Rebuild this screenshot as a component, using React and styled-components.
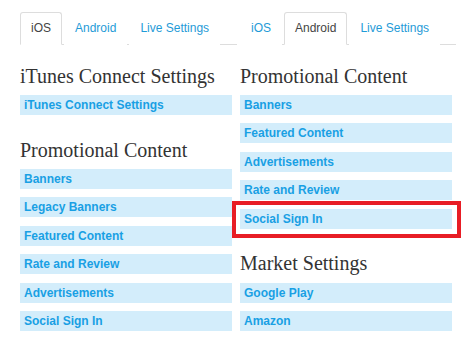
import React from 'react'
import styled, { createGlobalStyle } from 'styled-components'

const GlobalStyle = createGlobalStyle`
  body {
    margin: 0;
    background: #fff;
    font-family: "Liberation Sans", Arial, sans-serif;
  }
`

const Page = styled.div`
  display: grid;
  grid-template-columns: 217px 216px;
  column-gap: 3px;
  padding: 12px 0 0 20px;
`

const Column = styled.div`
  display: flex;
  flex-direction: column;
`

const TabBar = styled.ul`
  display: flex;
  margin: 0;
  padding: 0;
  list-style: none;
  height: 32px;
  border-bottom: 1px solid #ddd;
`

const Tab = styled.li`
  box-sizing: border-box;
  height: 33px;
  margin: 0 2px -1px 0;
  padding: 0 10px;
  line-height: 31px;
  font-size: 12px;
  color: ${p => (p.$active ? '#444' : '#1f9bd7')};
  background: #fff;
  border: 1px solid ${p => (p.$active ? '#ddd' : 'transparent')};
  border-bottom-color: ${p => (p.$active ? '#fff' : 'transparent')};
  border-radius: 3px 3px 0 0;
  white-space: nowrap;
`

const Section = styled.section`
  margin-top: ${p => (p.$first ? '18.5px' : '22.5px')};
`

const Heading = styled.h2`
  margin: 0 0 7.5px;
  font-family: "Liberation Serif", "Times New Roman", serif;
  font-weight: normal;
  font-size: 20px;
  line-height: 24px;
  color: #333;
`

const List = styled.ul`
  display: flex;
  flex-direction: column;
  gap: 8.4px;
  margin: 0;
  padding: 0;
  list-style: none;
`

const Row = styled.li`
  position: relative;
  box-sizing: border-box;
  width: 212px;
  height: 20px;
  padding-left: 4px;
  line-height: 20px;
  font-size: 12px;
  font-weight: bold;
  color: #19a0e4;
  background: #d3edfb;
`

const Highlight = styled.span`
  position: absolute;
  inset: -8px -9px -9px -8px;
  border: 4px solid #e81d25;
  pointer-events: none;
`

const Tabs = ({ active }) => (
  <TabBar>
    {['iOS', 'Android', 'Live Settings'].map(t => (
      <Tab key={t} $active={t === active}>{t}</Tab>
    ))}
  </TabBar>
)

const Group = ({ title, items, first, highlight }) => (
  <Section $first={first}>
    <Heading>{title}</Heading>
    <List>
      {items.map(item => (
        <Row key={item}>
          {item}
          {item === highlight && <Highlight />}
        </Row>
      ))}
    </List>
  </Section>
)

export default function App () {
  return (
    <>
      <GlobalStyle />
      <Page>
        <Column>
          <Tabs active='iOS' />
          <Group first title='iTunes Connect Settings' items={['iTunes Connect Settings']} />
          <Group
            title='Promotional Content'
            items={['Banners', 'Legacy Banners', 'Featured Content', 'Rate and Review', 'Advertisements', 'Social Sign In']}
          />
        </Column>
        <Column>
          <Tabs active='Android' />
          <Group
            first
            title='Promotional Content'
            items={['Banners', 'Featured Content', 'Advertisements', 'Rate and Review', 'Social Sign In']}
            highlight='Social Sign In'
          />
          <Group title='Market Settings' items={['Google Play', 'Amazon']} />
        </Column>
      </Page>
    </>
  )
}
